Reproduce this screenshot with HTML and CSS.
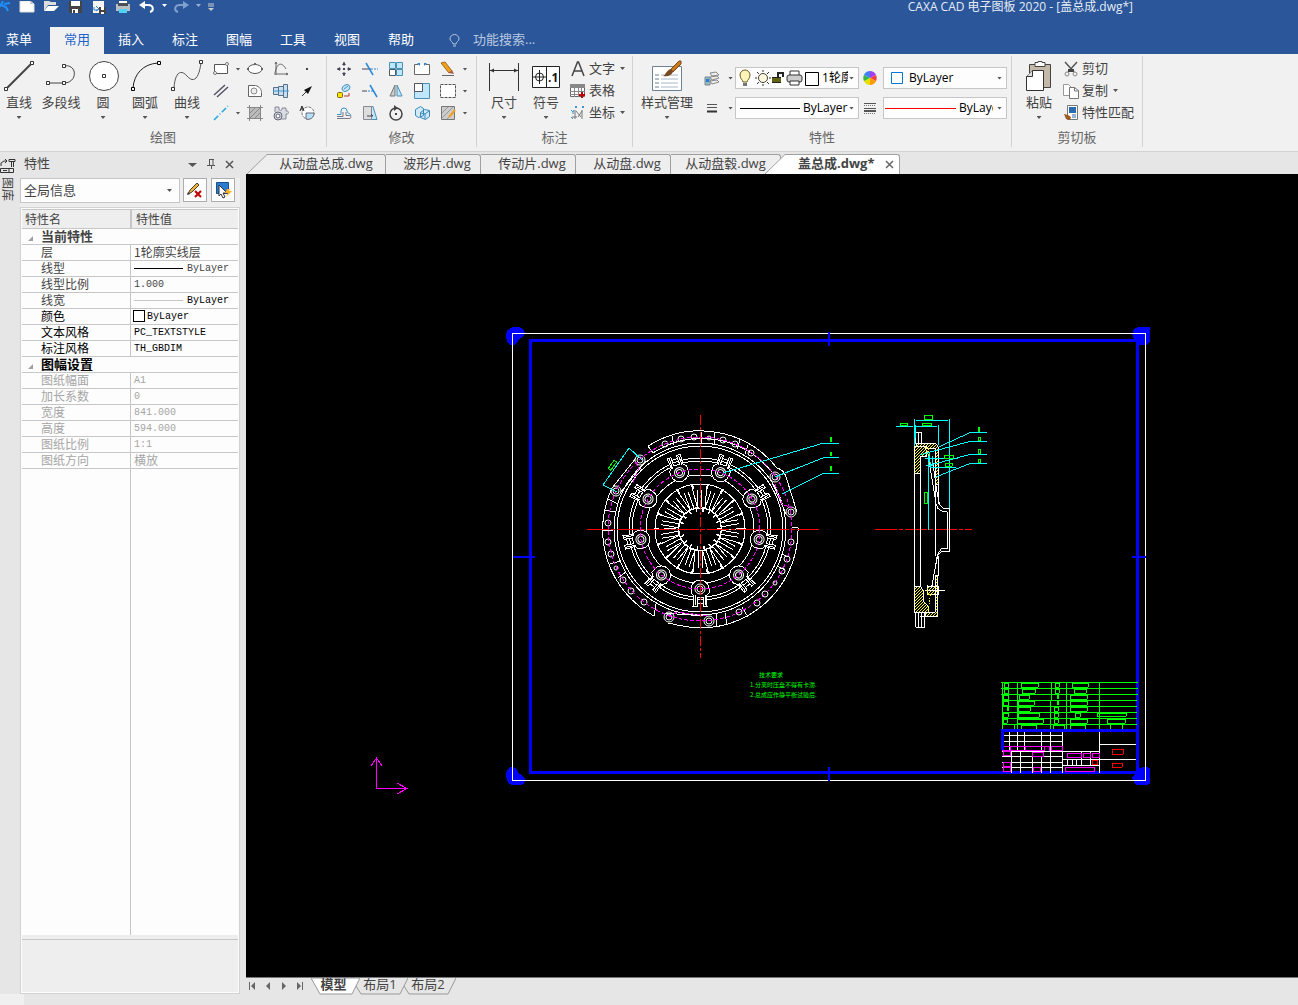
FILE: index.html
```html
<!DOCTYPE html>
<html lang="zh-CN">
<head>
  <meta charset="UTF-8">
  <meta name="viewport" content="width=device-width, initial-scale=1">
  <title>CAXA CAD 电子图板 2020 - [盖总成.dwg*]</title>
  <link rel="stylesheet" href="styles.css">
</head>
<body>
  <header class="titlebar">
    <div class="quick">
      <button class="q" aria-label="CAXA"><svg width="16" height="12"><path d="M8 0l-2 4-5 5M6 4l5 2 2 4M6 4l-3 0M9 3l6-1" fill="none" stroke="#1e90ff" stroke-width="2"/></svg></button>
      <button class="q" aria-label="新建"><svg width="16" height="12"><path d="M1 0h10l4 3v8H1z" fill="#fff" stroke="#ddd"/><path d="M11 0v3h4" fill="#ccc"/></svg></button>
      <button class="q" aria-label="打开"><svg width="16" height="12"><path d="M1 0h5l2 1h5v3H5l-4 6z" fill="#ddd"/><path d="M5 5h11l-5 5H1z" fill="#fff"/></svg></button>
      <button class="q" aria-label="保存"><svg width="16" height="12"><path d="M2 0h13v12H3l-1-1z" fill="#444"/><path d="M4 0h9v5H4zM5 8h6v4H5z" fill="#fff"/><path d="M6 9h2v3H6z" fill="#444"/></svg></button>
      <button class="q" aria-label="另存为"><svg width="16" height="13"><path d="M3 0h10v12H2V0z" fill="#f5f5f5"/><path d="M3 6v3h4M5 5l3 3-3 2" fill="none" stroke="#2b7cd0"/><path d="M8 6h7v7H8z" fill="#444"/><path d="M10 6h3v3h-3zM10 11h3v2h-3z" fill="#fff"/></svg></button>
      <button class="q" aria-label="打印"><svg width="16" height="12"><path d="M4 0h8v4H4z" fill="#fff"/><path d="M1 3h14v7H1z" fill="#b9bdc2"/><path d="M3 2h10v3H3z" fill="#4b4f55"/><path d="M4 8h8v4H4z" fill="#4fd0f5"/></svg></button>
      <button class="q" aria-label="撤销"><svg width="16" height="12"><path d="M3 4h6c6 0 6 6 2 7" fill="none" stroke="#fff" stroke-width="2"/><path d="M0 4l6-4v8z" fill="#fff"/></svg></button>
      <span class="q-arrow"></span>
      <button class="q dim" aria-label="重做"><svg width="16" height="12"><path d="M13 4H7C1 4 1 10 5 11" fill="none" stroke="#7fa0cf" stroke-width="2"/><path d="M16 4l-6-4v8z" fill="#7fa0cf"/></svg></button>
      <span class="q-arrow dim"></span>
      <button class="q small" aria-label="自定义"><svg width="8" height="12"><path d="M1 3h6M1 5h6" stroke="#ccc"/><path d="M1 7h6l-3 3z" fill="#ccc"/></svg></button>
    </div>
    <h1>CAXA CAD 电子图板 2020 - [盖总成.dwg*]</h1>
  </header>

  <nav class="menu">
    <button class="app">菜单</button>
    <button class="on">常用</button>
    <button>插入</button>
    <button>标注</button>
    <button>图幅</button>
    <button>工具</button>
    <button>视图</button>
    <button>帮助</button>
    <label class="search">
      <svg width="12" height="14"><path d="M4 10c0-2-3-3-3-5a4 4 0 0 1 9 0c0 2-3 3-3 5zM4 12h3" fill="none" stroke="#b8c7e0"/></svg>
      <input type="text" placeholder="功能搜索..." aria-label="功能搜索">
    </label>
  </nav>

  <section class="ribbon">
    <!-- 绘图 -->
    <div class="group draw">
      <div class="tools">
        <button class="big"><svg width="32" height="32"><path d="M4 28L29 3" stroke="#444" stroke-width="2"/><path d="M1.500 27.500h3v3h-3zM27.500 1.500h3v3h-3z" fill="#fff" stroke="#333"/></svg><span>直线</span><i class="caret"></i></button>
        <button class="big"><svg width="32" height="32"><path d="M2 23h17M18 6c15-3 15 17 1 17" fill="none" stroke="#444"/><path d="M1.500 21.500h3v3h-3zM17.500 21.500h3v3h-3zM17.500 4.500h3v3h-3z" fill="#fff" stroke="#333"/></svg><span>多段线</span></button>
        <button class="big"><svg width="32" height="32"><circle cx="17" cy="16" r="14.500" fill="#fff" stroke="#444"/><path d="M15.500 14.500h3v3h-3z" fill="#fff" stroke="#333"/></svg><span>圆</span><i class="caret"></i></button>
        <button class="big"><svg width="32" height="32"><path d="M4 28C5 14 14 4 29 3" fill="none" stroke="#222"/><path d="M2.500 27.500h3v3h-3zM28.500 1.500h3v3h-3z" fill="#fff" stroke="#000"/></svg><span>圆弧</span><i class="caret"></i></button>
        <button class="big"><svg width="34" height="32"><path d="M4 28C5 12 11 9 17 16c7 8 12 2 14-13" fill="none" stroke="#555"/><path d="M1.500 27.500h3v3h-3zM29.500.500h3v3h-3z" fill="#fff" stroke="#333"/></svg><span>曲线</span><i class="caret"></i></button>
        <div class="icons">
          <button aria-label="矩形"><svg width="16" height="16"><path d="M1.500 3.500h13v9h-13z" fill="#fff" stroke="#555"/><circle cx="14" cy="3" r="1.500" fill="#fff" stroke="#777"/><circle cx="2" cy="12" r="1.500" fill="#fff" stroke="#777"/></svg></button>
          <i class="caret"></i>
          <button aria-label="椭圆"><svg width="16" height="16"><ellipse cx="8" cy="8" rx="7" ry="4.500" fill="#fff" stroke="#555"/><path d="M0 7h2v2H0zM14 7h2v2h-2zM7 2h2v2H7z" fill="#666"/></svg></button>
          <button aria-label="公式曲线"><svg width="16" height="16"><path d="M3 1v13M1 13h14M2 12c2-11 7-11 11-4M2 3l1-2 1 2M13 12l2 1-2 1" fill="none" stroke="#666"/></svg></button>
          <button aria-label="点"><svg width="16" height="16"><path d="M7 7h2v2H7z" fill="#444"/></svg></button>
          <button aria-label="平行线"><svg width="16" height="16"><path d="M1 12L12 2M4 14L15 4" stroke="#556" stroke-width="1.500"/></svg></button>
          <i></i>
          <button aria-label="轮廓"><svg width="16" height="16"><path d="M1.500 13.500v-11h7c4 1 6 4 6 7v4z" fill="#fff" stroke="#666"/><circle cx="7" cy="8" r="3" fill="#eee" stroke="#888"/></svg></button>
          <button aria-label="孔轴"><svg width="16" height="16"><path d="M.500 4.500h5v-1h5v-2h4v13h-4v-2h-5v-1h-5z" fill="#c9dff0" stroke="#55708a"/><path d="M0 8h16" stroke="#3b9be0"/><path d="M5.500 4v8M10.500 2v12" stroke="#55708a"/></svg></button>
          <button aria-label="箭头"><svg width="16" height="16"><path d="M3 13l5-5" stroke="#333"/><path d="M13 3l-8 4 4 4z" fill="#111"/></svg></button>
          <button aria-label="中心线"><svg width="16" height="16"><path d="M1 15L15 1" stroke="#23a7e0" stroke-width="1.500" stroke-dasharray="6 2 1 2"/></svg></button>
          <i class="caret"></i>
          <button aria-label="填充"><svg width="16" height="16"><path d="M2.500 2.500h11v11h-11z" fill="#bbb" stroke="#555"/><path d="M0 2.500h16M2.500 0v16M0 13.500h16M13.500 0v16" stroke="#888"/><path d="M3 8l5-5M3 13L13 3M8 13l5-5" stroke="#888"/></svg></button>
          <button aria-label="图块"><svg width="16" height="16"><path d="M2 7V2h4v2c0 2 3 2 3 0V3h4v3h1c2 0 2 3 0 3h-1v5H7" fill="#d7dbe2" stroke="#889"/><circle cx="5" cy="11" r="4" fill="#d7dbe2" stroke="#667"/><circle cx="5" cy="11" r="2" fill="#fff" stroke="#667"/></svg></button>
          <button aria-label="局部放大"><svg width="16" height="16"><circle cx="9" cy="8" r="6" fill="#fff" stroke="#777" stroke-dasharray="3 1"/><path d="M7 8h8a6 6 0 0 1-8 6z" fill="#b5e2f9" stroke="#667"/><path d="M1 6l2-5 2 5M2 4h3" fill="none" stroke="#222"/></svg></button>
        </div>
      </div>
      <h2>绘图</h2>
    </div>

    <!-- 修改 -->
    <div class="group modify">
      <div class="tools">
        <div class="icons six">
          <button aria-label="平移"><svg width="16" height="16"><path d="M8 1v4M8 11v4M1 8h4M11 8h4" stroke="#445"/><path d="M6 4l2-3 2 3zM6 12l2 3 2-3zM4 6L1 8l3 2zM12 6l3 2-3 2zM7 7h2v2H7z" fill="#445"/></svg></button>
          <button aria-label="裁剪"><svg width="16" height="16"><path d="M0 8h9" stroke="#445"/><path d="M9 8h7" stroke="#2b88d8" stroke-dasharray="2 1"/><path d="M4 2l7 12" stroke="#2b88d8" stroke-width="1.500"/></svg></button>
          <button aria-label="阵列"><svg width="16" height="16"><path d="M1.500 1.500h6v6h-6zM8.500 1.500h6v6h-6zM8.500 8.500h6v6h-6z" fill="#bfe6fb" stroke="#4a90b5"/><path d="M1.500 8.500h6v6h-6z" fill="#fff" stroke="#4a5a66"/></svg></button>
          <button aria-label="打断"><svg width="16" height="16"><path d="M4.500 3.500h-4v10h15v-10h-4" fill="#fff" stroke="#666"/><path d="M3 2h3v3zM10 2h3l-3 3z" fill="#2b88d8"/></svg></button>
          <button aria-label="删除"><svg width="16" height="16"><path d="M1 2l4-1 7 9-3 2z" fill="#f0a020" stroke="#a86a10"/><path d="M9 12l3-3 2 4z" fill="#a05a50"/><path d="M2 14.500h12" stroke="#666"/></svg></button>
          <i class="caret"></i>
          <button aria-label="平移复制"><svg width="16" height="16"><rect x="1.500" y="9.500" width="5" height="5" rx="1" fill="#ffe100" stroke="#776a10"/><ellipse cx="10" cy="5" rx="4" ry="3" fill="#bfe6fb" stroke="#4a90c5" transform="rotate(-30 10 5)"/><path d="M8 6l4-3" stroke="#4a90c5"/><path d="M8 13h5v-3" fill="none" stroke="#b33"/></svg></button>
          <button aria-label="延伸"><svg width="16" height="16"><path d="M0 8h5" stroke="#445"/><path d="M6 8h6" stroke="#2b88d8" stroke-dasharray="2 1"/><path d="M8 2l7 12" stroke="#2b88d8" stroke-width="1.500"/></svg></button>
          <button aria-label="镜像"><svg width="16" height="16"><path d="M7 2v11H2z" fill="#ccc" stroke="#777"/><path d="M9 2v11h5z" fill="#bfe6fb" stroke="#4a90b5"/></svg></button>
          <button aria-label="缩放"><svg width="16" height="16"><path d="M.500.500h15v15H.500z" fill="#bfe6fb" stroke="#4a90b5"/><path d="M.500.500h8v8h-8z" fill="#fff" stroke="#556"/></svg></button>
          <button aria-label="分解"><svg width="16" height="16"><path d="M.500 1.500h15v13H.500z" fill="#fff" stroke="#555" stroke-dasharray="3 1"/></svg></button>
          <i class="caret"></i>
          <button aria-label="等距线"><svg width="16" height="16"><path d="M1 9.500h4V6a3 3 0 0 1 6 0c0 3 4 2 4 5" fill="none" stroke="#3b93c8"/><path d="M1 13.500h12c3 0 2-3 0-3h-3V7M1 11.500h6V7" fill="none" stroke="#778"/></svg></button>
          <button aria-label="拉伸"><svg width="16" height="16"><path d="M8 1.500h3l4 13H8z" fill="#bfe6fb" stroke="#4a90b5"/><path d="M1.500 1.500h8v13h-8z" fill="#ddd" stroke="#889"/><path d="M5 11h6l-2-2" fill="none" stroke="#445"/></svg></button>
          <button aria-label="旋转"><svg width="16" height="16"><circle cx="8" cy="9" r="6" fill="none" stroke="#444" stroke-width="1.500"/><path d="M6 0l4 3-4 3z" fill="#444"/><path d="M7 8h2v2H7z" fill="#444"/></svg></button>
          <button aria-label="三维"><svg width="16" height="16"><path d="M1.500 4.500l5-3 3 2v7l-5 2-3-2zM6.500 7.500l4-3 5 1v6l-4 3-5-2z" fill="#cfeafb" stroke="#3b88b8"/><path d="M7 8l4 1v5M11 9l4-3" fill="none" stroke="#3b88b8"/></svg></button>
          <button aria-label="编辑填充"><svg width="16" height="16"><path d="M1.500 1.500h13v13h-13z" fill="#ccc" stroke="#777"/><path d="M2 8l6-6M2 13L13 2M7 14l7-7" stroke="#999"/><path d="M9 12l6-7" stroke="#f0a020" stroke-width="2"/></svg></button>
          <i class="caret"></i>
        </div>
      </div>
      <h2>修改</h2>
    </div>

    <!-- 标注 -->
    <div class="group note">
      <div class="tools">
        <button class="big"><svg width="32" height="32"><path d="M1.500 3v28M30.500 3v28M2 10.500h28" stroke="#333"/><path d="M2 10.500l4-2v4zM30 10.500l-4-2v4z" fill="#333"/></svg><span>尺寸</span><i class="caret"></i></button>
        <button class="big"><svg width="32" height="32"><path d="M2.500 6.500h27v21h-27zM16.500 6v22" fill="#fff" stroke="#222"/><circle cx="9.500" cy="17" r="4" fill="none" stroke="#222"/><path d="M9.500 10v14M3 17h13" stroke="#222"/><text x="18" y="22" class="tol">.1</text></svg><span>符号</span><i class="caret"></i></button>
        <div class="rows">
          <button><svg width="16" height="16"><path d="M2 15L7.500 1h1L14 15M4 10h8" fill="none" stroke="#444" stroke-width="1.500"/></svg>文字<i class="caret"></i></button>
          <button><svg width="16" height="16"><path d="M.500 1.500h14v12H.500z" fill="#fff" stroke="#666"/><path d="M0 1h15v4H0z" fill="#888"/><path d="M4.500 4v10M8.500 4v10M11.500 4v10M0 8.500h15M0 11.500h15" stroke="#888"/><path d="M12 9v6M9 12h6" stroke="#c00000" stroke-width="2"/></svg>表格</button>
          <button><svg width="16" height="16"><path d="M5 5v9M2 12h5M12 5v9M8 12l4-6M6 6l5 6" stroke="#777"/><path d="M1 5l2 2 1-2M3 7v2M5 1l2 2M7 1L5 3M12 1l2 2M14 1l-2 2M1 12l2 2" stroke="#3b93d8" fill="none"/></svg>坐标<i class="caret"></i></button>
        </div>
      </div>
      <h2>标注</h2>
    </div>

    <!-- 特性 -->
    <div class="group props">
      <div class="tools">
        <button class="big wide"><svg width="32" height="32"><path d="M1.500 6.500h29v24h-29z" fill="#fff" stroke="#6b8294"/><path d="M4 15h4M4 19h4M4 23h4M4 27h4" stroke="#6b8294"/><path d="M10 15h17M10 19h17M10 23h17M10 27h17" stroke="#a9b7c9"/><path d="M20 9l8-8 2 0 0 3-8 8z" fill="#c9781c" stroke="#7a4a18"/><path d="M12 16c3-1 3-6 8-7l2 3c-2 4-6 5-10 4z" fill="#7a4a20"/></svg><span>样式管理</span><i class="caret"></i></button>
        <div class="combos">
          <button class="mini" aria-label="图层"><svg width="16" height="16"><path d="M6 3l6-1 3 3-7 1zM6 7l7-1 2 2-7 2zM6 11l7-1 2 2-7 2z" fill="#eee" stroke="#888"/><path d="M1 7h5v8H1z" fill="#9bb" stroke="#789"/><path d="M2 9h3v3H2z" fill="#2b7cd0"/></svg><i class="caret"></i></button>
          <div class="combo">
            <svg width="84" height="20"><path d="M6 13c0-2-3-3-3-7a5 5 0 0 1 10 0c0 4-3 5-3 7z" transform="translate(1 1)" fill="#fff3b8" stroke="#6a5a20"/><path d="M7 15h4v3H7z" fill="#777"/><circle cx="27" cy="10" r="4.500" fill="#fff8e0" stroke="#443"/><path d="M27 2v2M27 16v2M19 10h2M33 10h2M21 4l2 2M33 4l-2 2M21 16l2-2M33 16l-2-2" stroke="#333"/><path d="M36 9h9v6h-9z" fill="#222"/><path d="M36 11h9M36 13h9" stroke="#a5a500"/><path d="M42 9V5h5v4" fill="none" stroke="#222" stroke-width="2"/><path d="M54 8V3h9v5" fill="#fff" stroke="#333"/><rect x="51" y="7" width="15" height="7" rx="2" fill="#ccc" stroke="#333"/><path d="M54 13h9v4h-9z" fill="#fff" stroke="#333"/><path d="M69.500 4.500h13v13h-13z" fill="#fff" stroke="#000"/></svg>
            <select aria-label="当前图层"><option>1轮廓实线层</option></select><i class="caret"></i>
          </div>
          <span class="mid"><svg width="14" height="14"><path d="M7 7V0a7 7 0 0 1 6 4z" fill="#a040f0"/><path d="M7 7l6-3a7 7 0 0 1 0 6z" fill="#f04040"/><path d="M7 7l6 3a7 7 0 0 1-6 4z" fill="#ff9a00"/><path d="M7 7v7a7 7 0 0 1-6-4z" fill="#e8e000"/><path d="M7 7l-6 3a7 7 0 0 1 0-6z" fill="#30b840"/><path d="M7 7L1 4a7 7 0 0 1 6-4z" fill="#4080f0"/></svg></span>
          <div class="combo">
            <svg width="23" height="20"><path d="M7.500 4.500h11v11h-11z" fill="#fff" stroke="#0078d7"/></svg>
            <select aria-label="颜色"><option>ByLayer</option></select><i class="caret"></i>
          </div>
          <button class="mini" aria-label="线宽"><svg width="16" height="16"><path d="M3 4.500h10M3 7.500h10" stroke="#555"/><path d="M3 11.500h10" stroke="#333" stroke-width="2"/></svg><i class="caret"></i></button>
          <div class="combo">
            <svg width="65" height="20"><path d="M4 10.500h60" stroke="#000"/></svg>
            <select aria-label="线宽值"><option>ByLayer</option></select><i class="caret"></i>
          </div>
          <span class="mid"><svg width="14" height="14"><path d="M1 2.500h12M1 7.500h12" stroke="#555"/><path d="M1 4.500h12M1 12.500h12" stroke="#777" stroke-dasharray="1 1"/><path d="M1 10h12" stroke="#555" stroke-width="2"/></svg></span>
          <div class="combo">
            <svg width="73" height="20"><path d="M1 10.500h71" stroke="#f00"/></svg>
            <select class="cut" aria-label="线型"><option>ByLayer</option></select><i class="caret"></i>
          </div>
        </div>
      </div>
      <h2>特性</h2>
    </div>

    <!-- 剪切板 -->
    <div class="group clip">
      <div class="tools">
        <button class="big"><svg width="32" height="32"><path d="M6.500 4.500h21v23h-21z" fill="#c4b8a8" stroke="#444"/><path d="M12 2.500h3v-1h4v1h3v4H12z" fill="#fff" stroke="#444"/><path d="M9.500 10.500h11v20h-17v-14z" fill="#fff" stroke="#333"/><path d="M9.500 10.500v6h-6" fill="#ddd" stroke="#333"/></svg><span>粘贴</span><i class="caret"></i></button>
        <div class="rows">
          <button><svg width="16" height="16"><path d="M2 1l9 10M14 1L5 11" stroke="#555" stroke-width="1.500"/><circle cx="4" cy="13" r="2" fill="none" stroke="#888"/><circle cx="12" cy="13" r="2" fill="none" stroke="#888"/><path d="M5 8h6v3H5z" fill="#444"/></svg>剪切</button>
          <button><svg width="16" height="16"><path d="M.500 1.500h5l3 3v8h-8z" fill="#fff" stroke="#999"/><path d="M6.500 4.500h5l4 3v8h-9z" fill="#fff" stroke="#777"/><path d="M11.500 4v4h4" fill="none" stroke="#777"/></svg>复制<i class="caret"></i></button>
          <button><svg width="16" height="16"><path d="M4.500.500h10v14h-10z" fill="#fff" stroke="#777"/><path d="M6 2h7v6H6z" fill="#2b6cb0"/><path d="M9 10h4M9 12h4" stroke="#2b6cb0"/><path d="M1 9l4 1 3 2-1 3-4-1z" fill="#a05a20"/></svg>特性匹配</button>
        </div>
      </div>
      <h2>剪切板</h2>
    </div>
  </section>

  <main class="workspace">
    <aside class="dock">
      <svg width="16" height="20"><path d="M1 9V6l3-2h3M5 2l2 2-2 2M9 2.500h6v2H9zM11.500 5v5M13.500 5v5M.500 11.500h13v4H.500zM3 13.500h4M9 12v3" fill="none" stroke="#333"/></svg>
      <button>图库</button>
    </aside>

    <aside class="panel">
      <div class="panel-head">
        <h2>特性</h2>
        <button aria-label="菜单"><svg width="10" height="10"><path d="M1 4h9L5.500 8z" fill="#555"/></svg></button>
        <button aria-label="固定"><svg width="10" height="10"><path d="M3.500 0v6M7 0v6M3 .500h5M1 6.500h8M5.500 7v3" stroke="#555" fill="none"/></svg></button>
        <button aria-label="关闭"><svg width="10" height="10"><path d="M1 2l7 7M8 2L1 9" stroke="#555" stroke-width="1.500"/></svg></button>
      </div>
      <div class="panel-tools">
        <div class="combo"><select aria-label="选择对象"><option>全局信息</option></select><i class="caret"></i></div>
        <button aria-label="清除选择"><svg width="20" height="18"><path d="M3 13l2-4 7-7 2 2-7 7z" fill="#f0b040" stroke="#443"/><path d="M2 14l1-3 2 2z" fill="#333"/><path d="M10 10l6 6M16 10l-6 6" stroke="#c00000" stroke-width="2"/></svg></button>
        <button aria-label="快速选择"><svg width="20" height="18"><path d="M3.500 1.500h12v11h-12z" fill="#2b7cd0" stroke="#1a4f90"/><path d="M6 4l8 8h-4l2 4-2 1-2-4-2 2z" fill="#fff" stroke="#333"/><path d="M14 8l-2 4h3l-2 4 6-6h-3l1-2z" fill="#ffb020"/></svg></button>
      </div>
      <div class="sheet">
        <table>
          <thead><tr><th>特性名</th><th>特性值</th></tr></thead>
          <tbody>
            <tr class="cat"><td colspan="2"><i class="fold"></i>当前特性</td></tr>
            <tr class="soft"><td>层</td><td class="cn">1轮廓实线层</td></tr>
            <tr class="soft"><td>线型</td><td><i class="line"></i>ByLayer</td></tr>
            <tr class="soft"><td>线型比例</td><td>1.000</td></tr>
            <tr><td class="soft">线宽</td><td><i class="line thin"></i>ByLayer</td></tr>
            <tr><td>颜色</td><td class="tight"><i class="swatch"></i>ByLayer</td></tr>
            <tr><td>文本风格</td><td>PC_TEXTSTYLE</td></tr>
            <tr><td>标注风格</td><td>TH_GBDIM</td></tr>
            <tr class="cat dark"><td colspan="2"><i class="fold"></i>图幅设置</td></tr>
            <tr class="off"><td>图纸幅面</td><td>A1</td></tr>
            <tr class="off"><td>加长系数</td><td>0</td></tr>
            <tr class="off"><td>宽度</td><td>841.000</td></tr>
            <tr class="off"><td>高度</td><td>594.000</td></tr>
            <tr class="off"><td>图纸比例</td><td>1:1</td></tr>
            <tr class="off"><td>图纸方向</td><td class="cn">横放</td></tr>
          </tbody>
        </table>
        <div class="blank"></div>
        <div class="hint"></div>
      </div>
    </aside>

    <section class="document">
      <nav class="files">
        <svg class="slope" width="20" height="20"><path d="M0 20L20 .500V20z" fill="#eee"/><path d="M0 20L20 .500" stroke="#a0a0a0"/></svg>
        <button class="first">从动盘总成.dwg</button>
        <button>波形片.dwg</button>
        <button>传动片.dwg</button>
        <button>从动盘.dwg</button>
        <button class="last">从动盘毂.dwg</button>
        <svg class="slope over" width="20" height="20"><path d="M0 20L20 .500V20z" fill="#fff"/><path d="M0 20L20 .500" stroke="#a0a0a0"/></svg>
        <button class="on">盖总成.dwg*<svg width="10" height="10"><path d="M1 1l7 7M8 1L1 8" stroke="#666" stroke-width="1.500"/></svg></button>
      </nav>

      <svg class="canvas" viewBox="246 174 1052 803" preserveAspectRatio="xMinYMin meet" shape-rendering="crispEdges" fill="none">
        <defs>
          <pattern id="hatch" width="9" height="9" patternUnits="userSpaceOnUse"><path d="M0 9L9 0M-2 2L2-2M7 11L11 7" stroke="#ff0" stroke-width="3"/></pattern>
          <!-- pressure plate clip, drawn below the centre -->
          <g id="lug">
            <path d="M-9 64V60A9 9 0 0 1 9 60V64L6 67L7 77H3V68H-3V77H-7L-6 67z" fill="#000"/>
            <circle cy="60" r="3" shape-rendering="auto"/><circle cy="60" r="5" shape-rendering="auto"/>
            <path d="M-3 74H3M-5 66V76M5 66V76"/>
          </g>
          <!-- one finger of the diaphragm spring -->
          <g id="finger">
            <path d="M-1.500 22V39M2.500 22V39M-5 23L-7 43M-3 17V21H4V17"/>
            <path d="M0 41V46" transform="rotate(10)" stroke-width="2"/>
          </g>
        </defs>

        <!-- sheet frame -->
        <g fill="#00f">
          <path d="M506 335c0-5 4-8 9-8 5-1 9 2 10 6-1 4-5 5-7 8-1 3-4 5-7 4-3-1-5-5-5-10z"/>
          <path d="M1132 334c1-5 5-8 10-7h8v13c0 4-4 6-9 5-4 0-5-3-7-6z"/>
          <path d="M506 774c0-4 3-7 7-7 4 1 5 4 5 6 4 2 7 4 7 7 0 4-3 5-6 5h-7c-4-1-6-5-6-11z"/>
          <path d="M1132 777c3-2 4-4 5-7 3-3 8-4 13-2v16c-2 1-5 1-9 1-5 1-8-2-9-8z"/>
        </g>
        <path d="M512.500 333.500h633v447h-633z" stroke="#fff"/>
        <path d="M530.500 340.500h607v432h-607z" stroke="#00f" stroke-width="3"/>
        <path d="M828.500 332v14M828.500 767v14M513 556.500h22M1132 556.500h14" stroke="#00f" stroke-width="2"/>

        <!-- clutch cover, front view -->
        <g stroke="#fff">
          <path d="M648 446A98 98 0 0 1 777 468Q785 470 787 480L797 512M798 527A98 98 0 0 1 700 628Q690 628 668 623M654 616A98 98 0 0 1 612 488L636 458M648 446l5 7M798 527h-6M654 616l2-12"/>
          <path d="M653 453A90 90 0 0 1 772 472M620 493L646 461M664 613L704 616M771 480L786 514"/>
          <circle cx="700" cy="529" r="86"/><circle cx="700" cy="529" r="83"/>
          <circle cx="700" cy="529" r="71"/><circle cx="700" cy="529" r="68"/>
          <circle cx="700" cy="529" r="54"/><circle cx="700" cy="529" r="45"/><circle cx="700" cy="529" r="22" stroke-dasharray="4 3"/>
          <g transform="translate(700 529)">
            <use href="#lug"/><use href="#lug" transform="rotate(40)"/><use href="#lug" transform="rotate(80)"/>
            <use href="#lug" transform="rotate(120)"/><use href="#lug" transform="rotate(160)"/><use href="#lug" transform="rotate(200)"/>
            <use href="#lug" transform="rotate(240)"/><use href="#lug" transform="rotate(280)"/><use href="#lug" transform="rotate(320)"/>
            <use href="#finger"/><use href="#finger" transform="rotate(20)"/><use href="#finger" transform="rotate(40)"/>
            <use href="#finger" transform="rotate(60)"/><use href="#finger" transform="rotate(80)"/><use href="#finger" transform="rotate(100)"/>
            <use href="#finger" transform="rotate(120)"/><use href="#finger" transform="rotate(140)"/><use href="#finger" transform="rotate(160)"/>
            <use href="#finger" transform="rotate(180)"/><use href="#finger" transform="rotate(200)"/><use href="#finger" transform="rotate(220)"/>
            <use href="#finger" transform="rotate(240)"/><use href="#finger" transform="rotate(260)"/><use href="#finger" transform="rotate(280)"/>
            <use href="#finger" transform="rotate(300)"/><use href="#finger" transform="rotate(320)"/><use href="#finger" transform="rotate(340)"/>
          </g>
          <g shape-rendering="auto">
            <circle cx="665" cy="444" r="3"/><circle cx="681" cy="439" r="3"/><circle cx="694" cy="437" r="3"/><circle cx="709" cy="438" r="2"/>
            <circle cx="723" cy="440" r="3"/><circle cx="735" cy="444" r="3"/><circle cx="751" cy="453" r="3"/>
            <circle cx="608" cy="523" r="3"/><circle cx="608" cy="542" r="3"/><circle cx="611" cy="554" r="3"/><circle cx="616" cy="568" r="2"/>
            <circle cx="623" cy="580" r="3"/><circle cx="631" cy="591" r="3"/><circle cx="644" cy="602" r="3"/>
            <circle cx="739" cy="612" r="3"/><circle cx="757" cy="603" r="3"/><circle cx="765" cy="594" r="3"/><circle cx="775" cy="583" r="2"/>
            <circle cx="782" cy="571" r="3"/><circle cx="787" cy="559" r="3"/><circle cx="791" cy="542" r="3"/>
            <circle cx="616" cy="491" r="3"/><circle cx="616" cy="491" r="5"/><circle cx="640" cy="460" r="3"/><circle cx="640" cy="460" r="5"/>
            <circle cx="775" cy="477" r="3"/><circle cx="775" cy="477" r="5"/><circle cx="791" cy="512" r="3"/><circle cx="791" cy="512" r="5"/>
            <circle cx="669" cy="617" r="3"/><circle cx="669" cy="617" r="5"/><circle cx="709" cy="621" r="3"/><circle cx="709" cy="621" r="5"/>
          </g>
          <path d="M672 436l2 9M701 432v11M714 433v11M740 440l-3 9M748 445l-3 9M602 530h11M604 510l11 2M608 499l10 5M610 564l10-3M618 578l8-6M716 614v13M725 613l2 11M742 607l6 10M789 557l-8-3M785 570l-8-4"/>
        </g>
        <g stroke="#f0f" stroke-dasharray="4 2">
          <circle cx="700" cy="529" r="92"/><circle cx="700" cy="529" r="60"/>
          <path d="M633 482l6-14-5-8M669 617l8-5 32 4M775 484l7 20 10 4"/>
        </g>
        <path d="M587 529.500h233M875 529.500h97" stroke="#f00" stroke-dasharray="22 2 4 2"/>
        <path d="M700.500 415v243" stroke="#f00" stroke-dasharray="10 2 3 2"/>
        <path d="M839 443.500h-17L723 473M839 457.500h-15L775 477M839 473.500h-16L782 494M642 460l-13-12-26 37 14 7" stroke="#0ff"/>
        <path d="M830 437h2v5h-2zM830 452h2v4h-2zM830 466h2v5h-2z" fill="#0f0"/>
        <path d="M611 460h3v10h-3z" transform="rotate(35 612 465)" stroke="#0f0"/>

        <!-- clutch cover, section view -->
        <g transform="translate(865 405) scale(.333333)" stroke-width="3">
          <path d="M149 124h33l3 30h-18v51h-18zM149 545h18l8 12v32l15 16v18h-41zM155 117h58l7 9v112h-9V130h-26v-6h-30zM187 540v28h34v-22h-34zM211 512v110h-30v12h38V512z" fill="url(#hatch)" stroke="#fff"/>
          <path d="M180 556h60M152 82h18v34h-18zM161 82v34M149 117v506M167 205v340M211 236v216M220 238v60M220 452v60M211 293l8 18 14 9h14M202 160l12 90 10 50 10 10h19v130h-24l-12 12-16 90M247 320v112h-18l-10 14-20 104M190 154l18 110 6 40M152 623v44h27v-44M161 623v44M170 623v44M164 634h55V560" stroke="#fff"/>
          <path d="M184 128l14 60M190 130l6 56M196 570l-6 50M188 548v22h20" stroke="#ff0" stroke-dasharray="4 4"/>
          <path d="M149 42v80M253 42v268M220 60v60M152 46h97M93 64h51M152 64h64M190 154v220M180 162h98M183 181h20M196 187h76M151 60v40M366 82h-49l-96 44M366 109h-50l-150 40M366 148h-50l-120 32M366 175h-50l-106 42M193 140l3 45M203 154v30" stroke="#0ff"/>
          <path d="M178 31h25v12h-25zM106 55h22v7h-22zM172 55h28v7h-28zM340 67h4v14h-4zM340 97h7v9h-7zM340 133h7v12h-7zM340 163h7v9h-7zM238 151h27v9h-27zM241 175h21v9h-21zM178 262h10v33h-10z" stroke="#0f0"/>
        </g>

        <text x="759" y="677" class="cad">技术要求</text>
        <text x="750" y="687" class="cad">1.分离时压盘不得有卡滞.</text>
        <text x="750" y="697" class="cad">2.总成应作静平衡试验后.</text>

        <!-- parts list and title block -->
        <g transform="translate(990 670) scale(.333333)" stroke-width="3">
          <path d="M34 37.500h410M34 55.500h410M34 73.500h410M37 91.500h404M37 109.500h404M37 127.500h404M37 145.500h404M37 163.500h404M37.500 37v140M82.500 37v140M184.500 37v54M181.500 91v86M229.500 37v140M328.500 37v140M73.500 163v14M361.500 163v14M397.500 163v14" stroke="#0f0"/>
          <path d="M43 40h12v13H43zM43 58h12v13H43zM40 76h15v13H40zM40 94h15v13H40zM40 130h15v12H40zM40 148h12v12H40zM94 40h51v12H94zM97 58h39v12H97zM88 76h30v12H88zM85 94h48v12H85zM85 112h36v12H85zM85 130h63v12H85zM82 148h78v12H82zM94 166h45v12M94 166v12M196 40h12v12h-12zM196 58h12v12h-12zM193 112h12v12h-12zM193 130h12v12h-12zM193 148h12v12h-12zM190 178v-12h33v12M247 40h48v12h-48zM253 58h36v12h-36zM241 76h51v12h-51zM241 94h51v12h-51zM241 112h51v12h-51zM256 130h15v12h-15zM241 148h51v12h-51zM241 178v-12h45v12M322 130h87v9h-87zM352 148h54v12h-54z" stroke="#0f0"/>
          <path d="M201 76h5v11h-5zM201 94h5v11h-5zM51 111h5v12h-5z" fill="#0f0"/>
          <path d="M37 196.500h180M37 214.500h180M37 229.500h180M37 244.500h291M37 259.500h180M37 277.500h180M37 292.500h180M58.500 181v60M82.500 181v60M103.500 181v60M154.500 181v60M181.500 181v127M217.500 181v127M328.500 181v127M64.500 244v64M91.500 244v64M127.500 244v64M154.500 259v49M217 268.500h222M217 286.500h111M328 223.500h111M232.500 268v18M247.500 268v18M259.500 268v18M274.500 244v42M301.500 244v42" stroke="#fff"/>
          <path d="M37 229h24v13H37zM61 229h45v13H61zM106 229h58v13h-58zM166 229h14v13M184 229h33v13h-33zM40 244h22v13H40zM127 247h33v13h-33zM40 277h22v13H40zM40 292h22v13H40zM130 292h22v13h-22zM232 250h42v13h-42zM280 250h22v13h-22zM307 250h21v13h-21zM226 292h87v13h-87z" stroke="#f0f"/>
          <path d="M367 238h33v15h-33zM367 280h30v12h-30zM307 271h15v13h-15z" stroke="#f00"/>
          <path d="M34 181.500h404M37 181v60" stroke="#00f" stroke-width="8"/>
        </g>

        <path d="M376.500 758v30.500H407M371 766l5.500-8 5.500 8M397 783l10 5.500-10 5.500" stroke="#f0f"/>
      </svg>

      <nav class="sheets">
        <button class="nav" aria-label="第一页"><svg width="8" height="8"><path d="M1.500 0v8" stroke="#666"/><path d="M7 0v8L3 4z" fill="#666"/></svg></button>
        <button class="nav" aria-label="上一页"><svg width="8" height="8"><path d="M6 0v8L2 4z" fill="#666"/></svg></button>
        <button class="nav" aria-label="下一页"><svg width="8" height="8"><path d="M2 0v8l4-4z" fill="#666"/></svg></button>
        <button class="nav" aria-label="最后一页"><svg width="8" height="8"><path d="M6.500 0v8" stroke="#666"/><path d="M1 0v8l4-4z" fill="#666"/></svg></button>
        <button class="sheet-tab on"><svg width="49" height="17"><path d="M0 0l9 16h32l8-16z" fill="#fff" stroke="#999"/></svg><span>模型</span></button>
        <button class="sheet-tab"><svg width="52" height="17"><path d="M0 8l5 8h39l8-16" fill="none" stroke="#999"/></svg><span>布局1</span></button>
        <button class="sheet-tab"><svg width="52" height="17"><path d="M0 8l5 8h39l8-16" fill="none" stroke="#999"/></svg><span>布局2</span></button>
      </nav>
    </section>
  </main>
  <footer class="status"></footer>
</body>
</html>
```
FILE: styles.css
```css
* {
  box-sizing: border-box;
}

body {
  margin: 0;
  min-height: 100vh;
  display: flex;
  flex-direction: column;
  font-family: "Open Sans", "Noto Sans CJK SC", sans-serif;
  font-size: 13px;
  line-height: 18px;
  color: #444;
  background: #e6e6e6;
  overflow: hidden;
}

button,
select,
input {
  font: inherit;
  color: inherit;
  background: none;
  border: 0;
  padding: 0;
  margin: 0;
}

button {
  cursor: pointer;
  white-space: nowrap;
}

h1,
h2 {
  margin: 0;
  font-size: 13px;
  font-weight: normal;
}

svg {
  display: block;
  flex: none;
}

.caret {
  flex: none;
  width: 5px;
  height: 3px;
  background: #555;
  clip-path: polygon(0 0, 100% 0, 50% 100%);
}

/* title and menu */
.titlebar {
  display: flex;
  height: 27px;
  padding-right: 165px;
  background: #2b579a;
  color: #e4ebf5;
}

.titlebar h1 {
  margin-left: auto;
  font-size: 12px;
  line-height: 14px;
  white-space: nowrap;
}

.quick {
  display: flex;
  height: 14px;
  margin-left: -9px;
}

.q {
  width: 24px;
  padding: 0 4px;
}

.q.small {
  width: 18px;
}

.q svg {
  height: 13px;
}

.q-arrow {
  width: 5px;
  height: 3px;
  margin: 4px 2px 0 3px;
  background: #fff;
  clip-path: polygon(0 0, 100% 0, 50% 100%);
}

.q-arrow.dim {
  background: #9cb0d0;
}

.menu {
  display: flex;
  height: 27px;
  background: #2b579a;
  color: #fff;
}

.menu button {
  width: 54px;
  height: 27px;
  padding-bottom: 4px;
}

.menu .app {
  width: 50px;
  padding-right: 12px;
}

.menu .on {
  background: #f1f1f1;
  color: #1e64c8;
}

.search {
  display: flex;
  align-items: center;
  gap: 12px;
  padding-left: 21px;
}

.search input {
  width: 120px;
  padding-bottom: 4px;
}

.search input::placeholder {
  color: #b8c7e0;
  opacity: 1;
}

/* ribbon */
.ribbon {
  display: flex;
  height: 98px;
  background: #f1f1f1;
  border-bottom: 1px solid #d2d2d2;
}

.group {
  flex: none;
  display: flex;
  flex-direction: column;
  margin: 2px 0 4px;
  border-right: 1px solid #d2d2d2;
}

.group h2 {
  text-align: center;
  line-height: 18px;
  color: #666;
}

.tools {
  display: flex;
  height: 72px;
  padding-top: 2px;
}

.draw .tools {
  margin-left: -2px;
  padding-right: 6px;
}

.modify .tools {
  padding: 2px 7px 0 4px;
}

.note .tools {
  padding: 2px 7px 0 6px;
}

.props .tools {
  padding: 2px 4px 0 8px;
}

.clip .tools {
  padding: 2px 8px 0 6px;
}

.big {
  width: 42px;
  height: 66px;
  display: flex;
  flex-direction: column;
  align-items: center;
  padding-top: 2px;
}

.big.wide {
  width: 52px;
}

.big span {
  margin-top: 1px;
  line-height: 18px;
}

.big .caret {
  margin-top: 5px;
}

.tol {
  font: bold 12px "Open Sans", sans-serif;
  fill: #111;
}

.icons {
  display: grid;
  grid-template-columns: 26px 8px 26px 26px 26px;
  grid-auto-rows: 22px;
  align-items: center;
  justify-items: center;
}

.icons.six {
  grid-template-columns: repeat(5, 26px) 8px;
}

.rows {
  display: grid;
  grid-auto-rows: 22px;
}

.rows button {
  display: flex;
  align-items: center;
  padding: 0 0 3px 3px;
}

.rows svg {
  margin: 3px 3px 0 0;
}

.rows .caret {
  margin: 2px 0 0 5px;
}

.combos {
  display: grid;
  grid-template-columns: 42px 124px 24px 124px;
  grid-auto-rows: 30px;
  align-content: start;
  align-items: center;
  padding-top: 5px;
}

.mini {
  display: flex;
  align-items: center;
  gap: 8px;
  padding-left: 11px;
}

.mid {
  padding-left: 4px;
}

.combo {
  display: flex;
  align-items: center;
  height: 22px;
  padding-right: 4px;
  border: 1px solid #c6c6c6;
  background: #fdfdfd;
  color: #000;
}

.combo select {
  appearance: none;
  flex: 1;
  min-width: 0;
  height: 20px;
  font-size: 12px;
  text-overflow: clip;
}

.props .combo select {
  margin-left: 2px;
  margin-right: 1px;
}

.props .combo .cut {
  margin-right: 4px;
}

/* left side */
.workspace {
  flex: 1;
  min-height: 0;
  display: flex;
}

.dock {
  width: 20px;
  padding-top: 5px;
}

.dock button {
  writing-mode: vertical-rl;
  font-size: 12px;
  line-height: 14px;
  text-orientation: sideways;
}

.panel {
  width: 220px;
  display: flex;
  flex-direction: column;
}

.panel-head {
  display: flex;
  align-items: center;
  gap: 9px;
  height: 26px;
  padding: 0 5px 2px 4px;
}

.panel-head h2 {
  flex: 1;
  padding-bottom: 2px;
}

.panel-tools {
  display: flex;
  gap: 3px;
  height: 29px;
  background: #eee;
}

.panel-tools .combo {
  width: 160px;
  height: 25px;
  padding-left: 3px;
  padding-right: 7px;
  color: #444;
}

.panel-tools .combo select {
  font-size: 13px;
  padding-bottom: 2px;
}

.panel-tools button {
  width: 24px;
  height: 24px;
  padding-left: 1px;
  border: 1px solid #adadad;
  background: #fdfdfd;
}

.panel-tools button + button {
  margin-left: 1px;
}

.sheet {
  flex: 1;
  display: flex;
  flex-direction: column;
  padding: 1px;
  border: 1px solid #d2d2d2;
  background: #fdfdfd;
}

.sheet table {
  width: 100%;
  table-layout: fixed;
  border-collapse: separate;
  border-spacing: 0;
  font: 12px/13px "Noto Sans CJK SC", sans-serif;
  color: #000;
}

.sheet th {
  height: 20px;
  padding: 0 3px 2px;
  text-align: left;
  font-weight: normal;
  color: #444;
  background: #eee;
  border: 1px solid #c6c6c6;
  border-width: 1px 0;
}

.sheet th:first-child {
  width: 108px;
}

.sheet th + th {
  padding-left: 4px;
  border-left-width: 2px;
}

.sheet td {
  height: 16px;
  padding: 0 0 2px 3px;
  border-bottom: 1px solid #c6c6c6;
  white-space: nowrap;
}

.sheet td:first-child {
  padding-left: 19px;
}

.sheet td + td {
  padding-bottom: 0;
  border-left: 1px solid #c6c6c6;
  font-family: "Liberation Mono", monospace;
  font-size: 10px;
}

.sheet td + .cn {
  padding-bottom: 2px;
  font-family: "Noto Sans CJK SC", sans-serif;
  font-size: 12px;
}

.sheet .soft {
  color: #444;
}

.sheet .off {
  color: #a6a6a6;
}

.sheet .cat td {
  padding-left: 6px;
  font-size: 13px;
  font-weight: bold;
  color: #444;
}

.sheet .dark td {
  color: #000;
}

.sheet td.tight {
  padding-left: 2px;
}

.fold {
  display: inline-block;
  width: 5px;
  height: 5px;
  margin-right: 8px;
  background: #a0a0a0;
  clip-path: polygon(100% 0, 100% 100%, 0 100%);
}

.line {
  display: inline-block;
  width: 49px;
  height: 1px;
  margin-right: 4px;
  vertical-align: middle;
  background: #000;
}

.thin {
  background: #c6c6c6;
}

.swatch {
  display: inline-block;
  width: 12px;
  height: 12px;
  margin-right: 2px;
  vertical-align: middle;
  border: 1px solid #000;
  background: #fff;
}

.blank {
  flex: 1;
  width: 109px;
  border-right: 1px solid #c6c6c6;
}

.hint {
  height: 57px;
  background: linear-gradient(#eee 4px, #c6c6c6 4px, #c6c6c6 5px, #eee 5px);
}

/* drawing area */
.document {
  flex: 1;
  min-width: 0;
  display: flex;
  flex-direction: column;
  margin-left: 6px;
}

.files {
  display: flex;
  height: 22px;
  padding: 2px 0 0 1px;
}

.files button {
  width: 95px;
  height: 20px;
  padding: 0 0 3px 8px;
  background: #eee;
  border: 1px solid #a0a0a0;
  border-width: 1px 1px 0 0;
  border-radius: 0 3px 0 0;
  line-height: 16px;
}

.files .first {
  width: 119px;
  padding-left: 0;
}

.files .last {
  width: 110px;
  padding-left: 0;
}

.files .over {
  z-index: 1;
  margin-left: -16px;
}

.files .on {
  display: flex;
  align-items: center;
  justify-content: space-between;
  width: 115px;
  padding: 0 4px 3px 13px;
  background: #fff;
  font-weight: bold;
}

.files .on svg {
  margin-top: 3px;
}

.canvas {
  flex: 1;
  width: 100%;
  min-height: 0;
  background: #000;
}

.cad {
  font: 6px "Noto Sans CJK SC", sans-serif;
  fill: #0f0;
}

.sheets {
  display: flex;
  height: 17px;
  border-top: 1px solid #777;
}

.nav {
  width: 16px;
  padding: 0 2px;
}

.sheet-tab {
  position: relative;
  width: 52px;
  margin-left: -4px;
  padding: 0 4px 3px 0;
  text-align: center;
  line-height: 13px;
}

.sheet-tab svg {
  position: absolute;
  inset: 0;
}

.sheet-tab span {
  position: relative;
}

.sheet-tab.on {
  width: 49px;
  margin-left: 1px;
  font-weight: bold;
}

.status {
  height: 11px;
  background: linear-gradient(90deg, #f0f0f0 24px, #e6e6e6 24px);
}
```
